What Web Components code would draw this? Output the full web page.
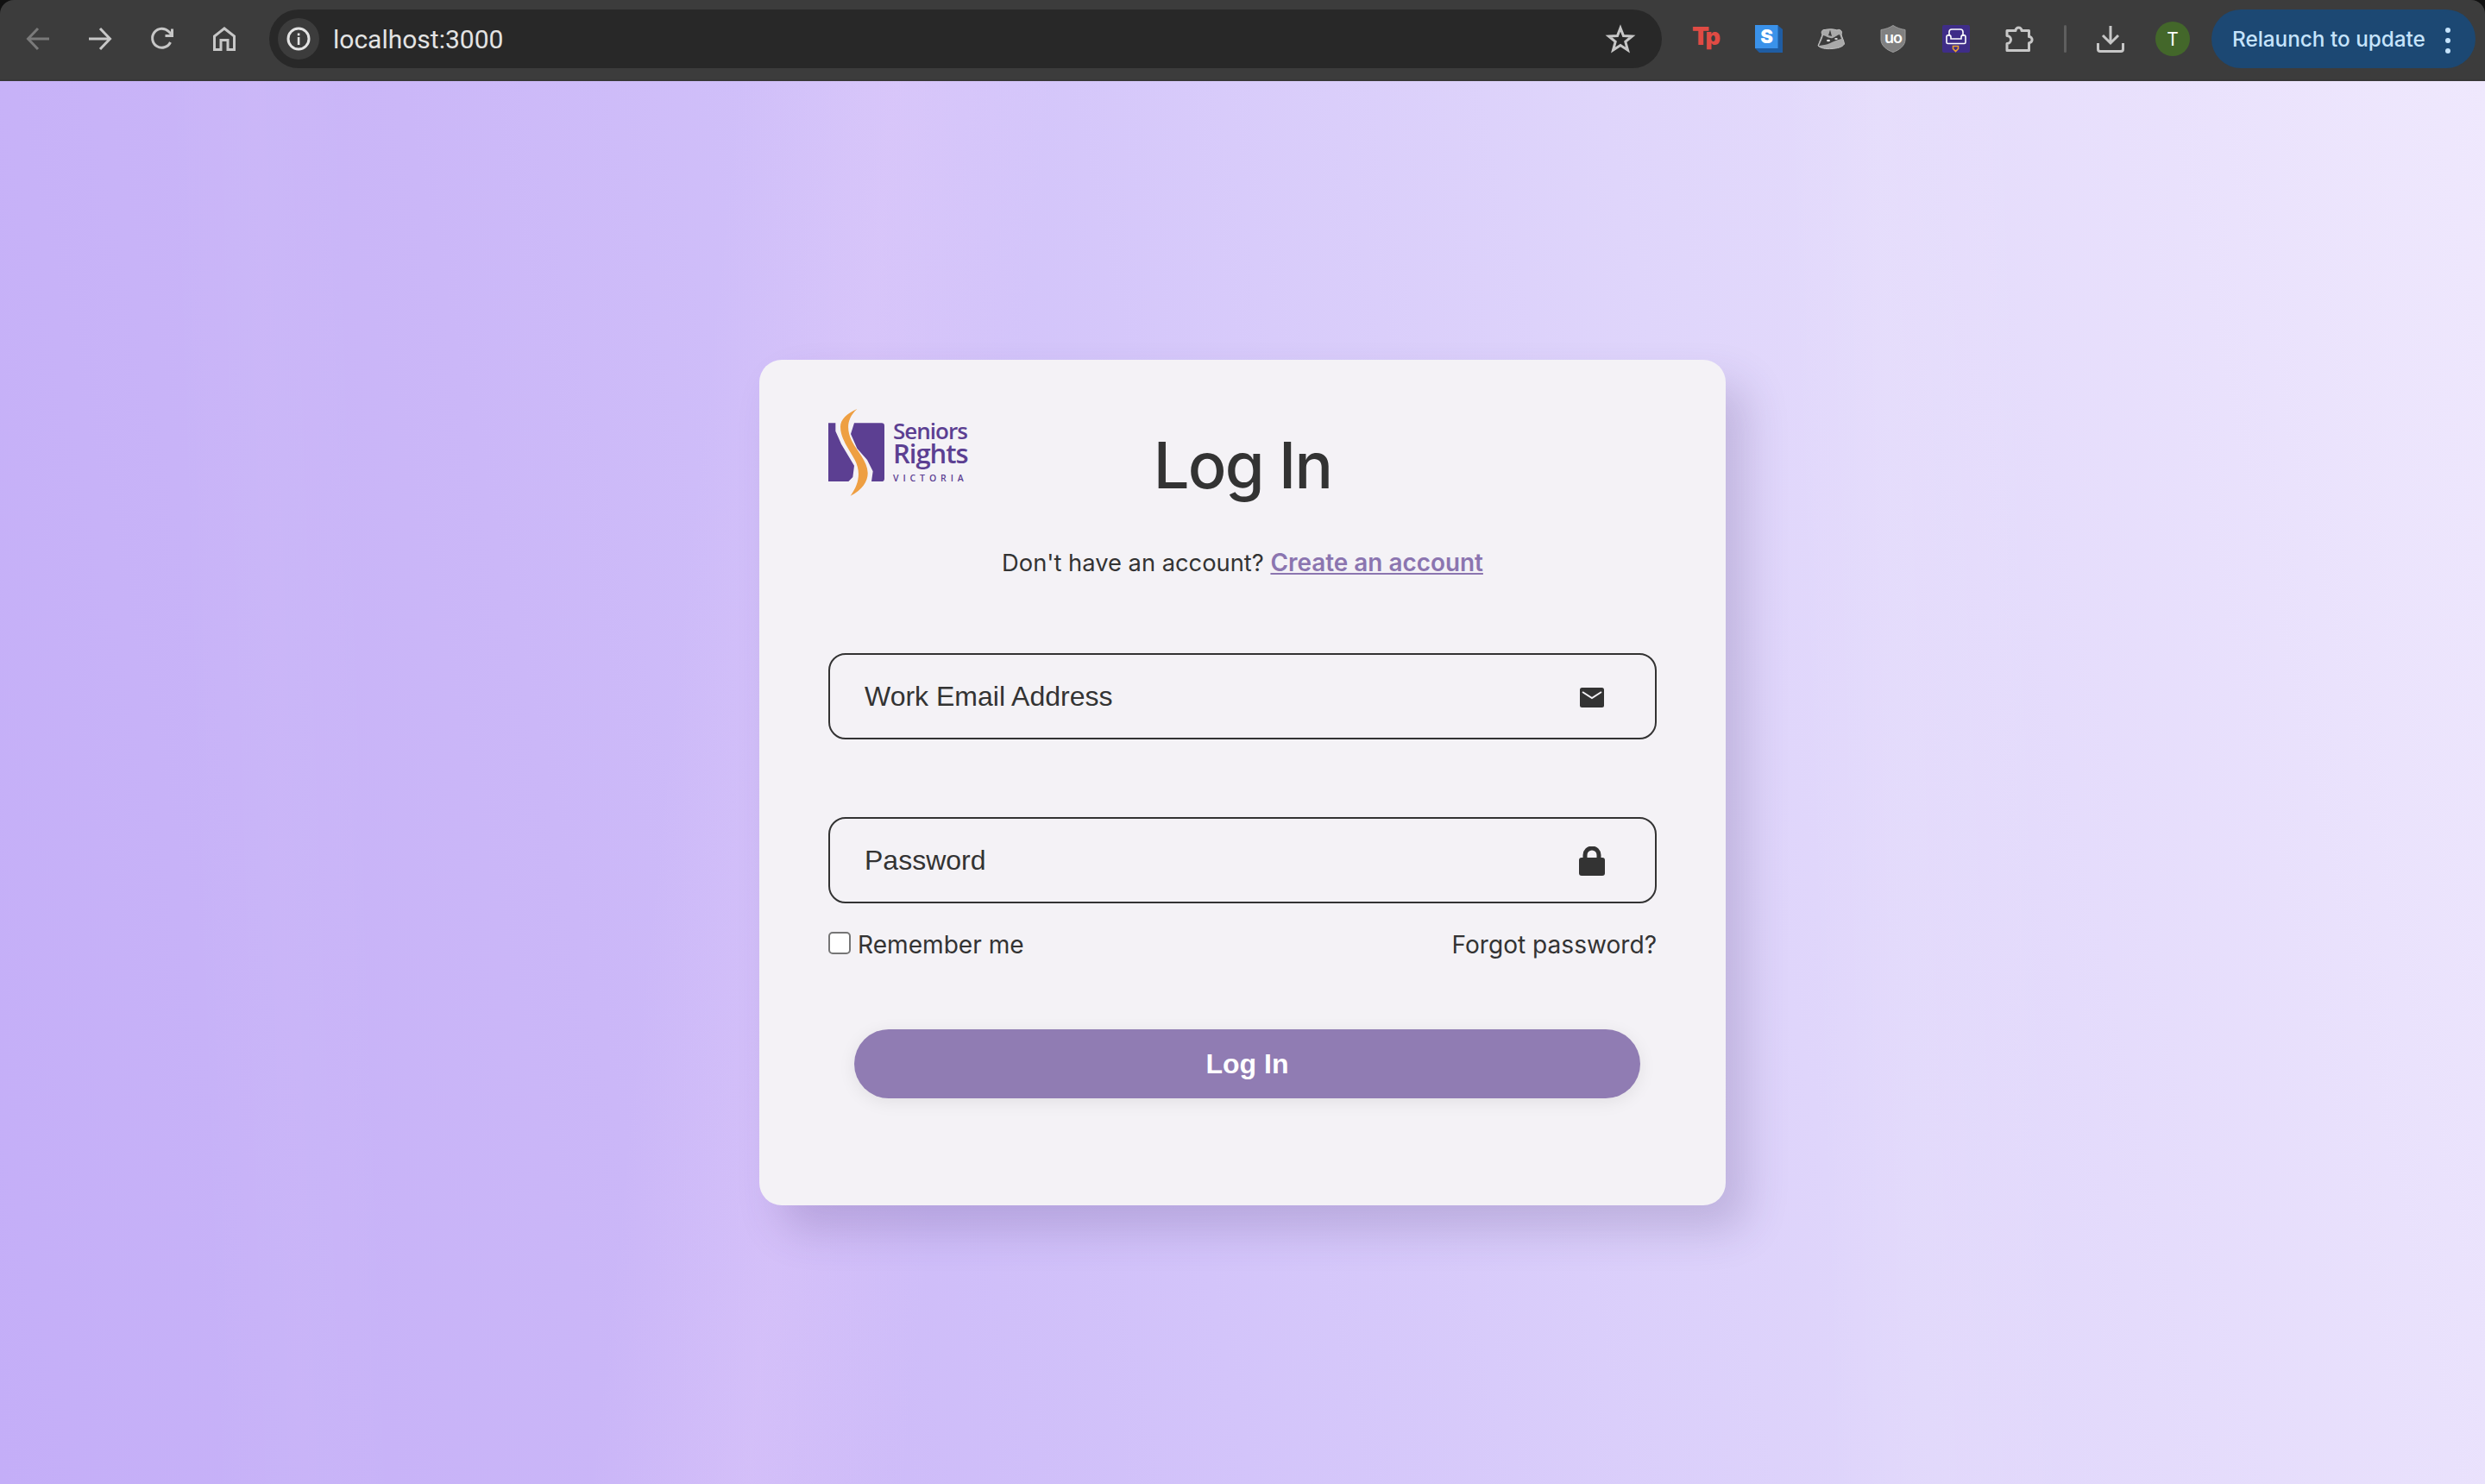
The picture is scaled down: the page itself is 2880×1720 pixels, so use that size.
<!doctype html>
<html><head><meta charset="utf-8">
<style>
html,body{margin:0;height:100%}
body{width:2880px;height:1720px;overflow:hidden;display:flex;flex-direction:column;font-family:Inter,"Liberation Sans",sans-serif;color:#333;background:#111}
</style></head><body>
<browser-bar></browser-bar>
<login-page>
  <login-card>
    <brand-logo slot="logo"></brand-logo>
    <text-field label="Work Email Address" icon="mail"></text-field>
    <text-field label="Password" icon="lock"></text-field>
  </login-card>
</login-page>
<script>
function def(name, html, init){
  customElements.define(name, class extends HTMLElement{
    constructor(){super();const r=this.attachShadow({mode:'open'});r.innerHTML=html;}
    connectedCallback(){ if(init) init.call(this,this.shadowRoot); }
  });
}
def('browser-bar',`<style>
:host{display:flex;flex:none;height:94px;box-sizing:border-box;background:#3c3c3c;border-bottom:2px solid #383838;border-radius:16px 16px 0 0;align-items:center;position:relative;font-family:Roboto,Inter,sans-serif;padding-bottom:2px}
svg{display:block;flex:none;overflow:visible}
.omni{width:1614px;height:68px;border-radius:34px;background:#282828;display:flex;align-items:center;box-sizing:border-box;padding-left:10px;flex:none}
.chip{width:48px;height:48px;border-radius:50%;background:#3c3c3c;display:flex;align-items:center;justify-content:center;flex:none}
.url{margin-left:16px;font-size:30px;color:#e3e3e3;flex:1}
.star{margin-right:32px}
.sep{width:3px;height:32px;background:#5f5f5f;border-radius:2px;flex:none}
.ava{width:40px;height:40px;border-radius:50%;background:#43672a;color:#fff;font:400 21px Inter,sans-serif;display:flex;align-items:center;justify-content:center;flex:none}
.pill{width:306px;height:68px;border-radius:34px;background:#1c4873;color:#c5e3fb;display:flex;align-items:center;box-sizing:border-box;padding-left:24px;font:500 24.300px Inter,Roboto,sans-serif;flex:none;position:relative}
.dots{position:absolute;left:271px;top:21px;width:6px;display:flex;flex-direction:column;gap:6px}
.dots i{display:block;width:6px;height:6px;border-radius:50%;background:#c5e3fb}
</style>
<svg width="26" height="26" viewBox="0 0 26 26" fill="none" stroke="#7a7a7a" stroke-width="3" style="margin-left:31px"><path d="M26 13H2M13 1 1.500 13 13 25"/></svg>
<svg width="26" height="26" viewBox="0 0 26 26" fill="none" stroke="#c7c7c7" stroke-width="3" style="margin-left:46px"><path d="M0 13H24M13 1 24.500 13 13 25"/></svg>
<svg width="26" height="26" viewBox="0 0 26 26" fill="none" stroke="#c7c7c7" stroke-width="3" style="margin-left:46px"><path d="M22.500 17A11 11 0 1 1 20.500 4.500L24 8"/><path d="M24.500 1.500V9.500H16.500" /></svg>
<svg width="26" height="28" viewBox="0 0 26 28" fill="none" stroke="#c7c7c7" stroke-width="3" style="margin-left:46px"><path d="M1.500 26.500V11L13 2 24.500 11V26.500H17V15.500H9V26.500Z"/></svg>
<div class="omni" style="margin-left:39px">
  <span class="chip"><svg width="28" height="28" viewBox="0 0 28 28" fill="none"><circle cx="14" cy="14" r="12" stroke="#e3e3e3" stroke-width="3"/><rect x="12.800" y="12" width="2.600" height="9" fill="#e3e3e3"/><rect x="12.800" y="7.500" width="2.600" height="2.800" fill="#e3e3e3"/></svg></span>
  <span class="url">localhost:3000</span>
  <svg class="star" width="32" height="32" viewBox="0 0 32 32" fill="none" stroke="#c7c7c7" stroke-width="3"><path d="M16 3.500 19.500 12.500 29.500 13 21.800 19.300 24.500 29 16 23.500 7.500 29 10.200 19.300 2.500 13 12.500 12.500Z"/></svg>
</div>
<svg width="30" height="30" viewBox="0 0 30 30" style="margin-left:35px;margin-right:2px"><text x="0" y="22" font-family="Inter,sans-serif" font-weight="900" fill="#e04b44"><tspan font-size="29">T</tspan><tspan font-size="27" dx="-4.500">p</tspan></text></svg>
<svg width="32" height="32" viewBox="0 0 32 32" style="margin-left:41px"><path d="M0 0H26L32 5V32H5L0 27Z" fill="#1f5da3"/><rect width="26.500" height="27" fill="#3a92ea"/><text x="13.500" y="21" text-anchor="middle" font-family="Inter,sans-serif" font-weight="900" font-size="22" fill="#fff">S</text></svg>
<svg width="33" height="24" viewBox="0 0 33 24" style="margin-left:39px"><path d="M2 20C4 15 6 10 7 7 5 4 7 1 10 1.500 14 .5 20 .5 24 2 27 0 31 3 29 7 30 11 32 14 32.500 18 30 22 24 23 18 23.500 11 24 5 23 2 20Z" fill="#a9a9a9" stroke="#c2c2c2" stroke-width="1"/><path d="M8 8C12 9 15 12 19 11 22 10 25 7 27 7L29 12C24 13 20 15 16 17 12 19 7 19 3 20 5 16 7 12 8 8Z" fill="#3c3c3c"/><path d="M16 1.500 18 9 14 8Z" fill="#3c3c3c"/><ellipse cx="14" cy="14" rx="2" ry="1.200" fill="#ddd"/><ellipse cx="23" cy="12" rx="1.800" ry="1.100" fill="#ddd"/></svg>
<svg width="30" height="32" viewBox="0 0 30 32" style="margin-left:41px"><path d="M15 .5C19 3 24 5 29 5.500V17C29 24 22 29 15 31.500 8 29 1 24 1 17V5.500C6 5 11 3 15 .5Z" fill="#808080" stroke="#9a9a9a" stroke-width="1"/><text x="15" y="21" text-anchor="middle" font-family="Inter,sans-serif" font-weight="600" font-size="18" letter-spacing="-1" fill="#fff">uo</text></svg>
<svg width="32" height="32" viewBox="0 0 32 32" fill="none" style="margin-left:42px"><rect width="32" height="32" rx="2" fill="#3f2d88"/><path d="M8 13V8a3 3 0 0 1 3-3H21a3 3 0 0 1 3 3V13M5 14a2.500 2.500 0 0 1 5 0V16H22V14a2.500 2.500 0 0 1 5 0V20a1.500 1.500 0 0 1-1.500 1.500H6.500A1.500 1.500 0 0 1 5 20Z" stroke="#fff" stroke-width="1.600"/><path d="M12.500 24.500H18.500V27.500L15.500 30.500 12.500 27.500Z" stroke="#e8a230" stroke-width="1.600"/></svg>
<svg width="32" height="32" viewBox="0 0 32 32" fill="none" stroke="#c7c7c7" stroke-width="3" stroke-linejoin="round" style="margin-left:41px"><path d="M2 6.500H12a3.500 3.500 0 0 1 7 0H27.500V13.500a3.600 3.600 0 0 1 0 7.200V29.500H2V21.500a4.500 4.500 0 0 0 0-9Z"/></svg>
<span class="sep" style="margin-left:36px"></span>
<svg width="32" height="32" viewBox="0 0 32 32" fill="none" stroke="#c7c7c7" stroke-width="3" style="margin-left:35px"><path d="M16 1V20M7 12 16 21 25 12M1.500 21V28a2.500 2.500 0 0 0 2.500 2.500H28a2.500 2.500 0 0 0 2.500-2.500V21"/></svg>
<span class="ava" style="margin-left:36px">T</span>
<span class="pill" style="margin-left:25px"><span>Relaunch to update</span><span class="dots"><i></i><i></i><i></i></span></span>
`);
def('login-page',`<style>
:host{display:flex;flex:1;align-items:center;justify-content:center;
background:
 linear-gradient(96deg,transparent 28%,rgba(228,205,250,.32) 34%,transparent 40%),
 linear-gradient(88deg,transparent 8%,rgba(255,255,255,.03) 12%,transparent 16%,transparent 72%,rgba(255,255,255,.08) 76%,transparent 82%),
 linear-gradient(78deg,#c4aef8 0%,#cbb7f8 25%,#d3c4fa 45%,#dfd5fb 68%,#efe8fd 100%);}
</style><slot></slot>`);
def('login-card',`<style>
:host{display:flex;flex-direction:column;width:1120px;height:980px;box-sizing:border-box;background:#f4f2f6;border-radius:26px;box-shadow:24px 28px 50px rgba(70,50,110,.2);padding:50px 80px 0}
.head{display:grid;grid-template-columns:1fr auto 1fr;align-items:start;height:124px}
h1{margin:28px 0 0;font:500 74px/1.2 Inter,sans-serif;color:#333;letter-spacing:-1.700px}
.sub{margin:0;text-align:center;font-size:27.300px;line-height:40px;color:#333;margin-top:41px}
a{color:#8b75b0;font-weight:600;font-size:27.900px}
.fields{display:flex;flex-direction:column;gap:90px;margin-top:84px}
.row{display:flex;justify-content:space-between;align-items:center;margin-top:14px;font-size:28.100px;line-height:40px;color:#333;height:68px;box-sizing:border-box}
.rem{display:flex;align-items:center;gap:8px}
.box{width:26px;height:26px;box-sizing:border-box;border:2px solid #767676;border-radius:5px;background:#fff;margin-top:-5px}
.btn{margin:64px 19px 0 30px;height:80px;border-radius:40px;background:#907cb3;color:#fff;font:700 32px "Liberation Sans",Arial,sans-serif;display:flex;align-items:center;justify-content:center;box-shadow:0 4px 20px rgba(0,0,0,.08)}
</style>
<div class="head"><slot name="logo"></slot><h1>Log In</h1><span></span></div>
<p class="sub">Don't have an account? <a href="#">Create an account</a></p>
<div class="fields"><slot></slot></div>
<div class="row"><span class="rem"><span class="box"></span>Remember me</span><span>Forgot password?</span></div>
<div class="btn">Log In</div>`);
def('brand-logo',`<style>
:host{display:flex;position:relative;width:170px;height:104px;margin-top:7px;color:#5c3f92;font-family:"Open Sans",sans-serif}
svg{flex:none;display:block}
.t{display:flex;flex-direction:column;margin-left:10px;width:84px;padding-top:13px;box-sizing:border-box}
.a{font-size:26px;font-weight:600;line-height:25px;letter-spacing:-1px;white-space:nowrap}
.b{font-size:31px;font-weight:600;line-height:27px;letter-spacing:-1px;white-space:nowrap}
.c{font-size:10.500px;font-weight:600;line-height:12px;letter-spacing:4.900px;white-space:nowrap;margin-top:9px}
</style>
<svg width="65" height="101" viewBox="180 103 195 303"><path d="M180 152H205V180L225 225 270 300 265 340 250 355H180Z" fill="#5c3f92"/><path d="M270 152H365Q375 152 375 162V345Q375 355 365 355H330L335 320 315 280 280 240 258 190Z" fill="#5c3f92"/><path d="M280 103C245 118 222 140 222 165 222 205 250 240 272 280 292 318 290 360 257 405 300 385 318 350 317 325 316 285 280 250 262 215 245 180 240 140 280 103Z" fill="#ee9f42"/></svg>
<div class="t"><span class="a">Seniors</span><span class="b">Rights</span><span class="c">VICTORIA</span></div>`);
const icons={
 mail:`<svg width="28" height="23" viewBox="0 0 28 23"><rect width="28" height="23" rx="2.500" fill="#333"/><path d="M3 5 14 12 25 5" fill="none" stroke="#f4f2f6" stroke-width="2"/></svg>`,
 lock:`<svg width="30" height="34" viewBox="0 0 30 34"><path d="M7 15V10a8 8 0 0 1 16 0V15" fill="none" stroke="#333" stroke-width="5"/><rect y="13" width="30" height="21" rx="3" fill="#333"/></svg>`};
def('text-field',`<style>
:host{display:flex;align-items:center;justify-content:space-between;height:100px;box-sizing:border-box;border:2px solid #333;border-radius:20px;padding:0 58px 0 40px;font:32px "Liberation Sans",Arial,sans-serif;color:#333}
svg{display:block}
.i{display:flex;width:30px;justify-content:center;margin-top:2px}
</style><span class="l"></span><span class="i"></span>`,function(r){
  r.querySelector('.l').textContent=this.getAttribute('label');
  r.querySelector('.i').innerHTML=icons[this.getAttribute('icon')];
});
</script>
</body></html>
